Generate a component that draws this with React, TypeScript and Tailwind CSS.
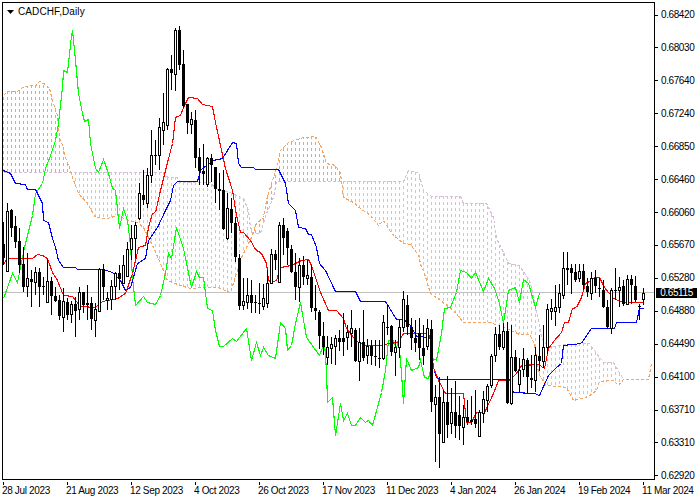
type Pt = [number, number];
// high, low, body top, body bottom, bullish — in chart pixels, one bar every 4px
type Bar = [number, number, number, number, number];

const bars: Bar[] = [
  [222, 265, 244, 258, 0], [203, 272, 211, 271, 1], [209, 237, 210, 228, 0], [216, 248, 226, 242, 0],
  [228, 273, 241, 265, 0], [247, 292, 264, 287, 0], [253, 297, 278, 286, 1], [270, 307, 279, 282, 0],
  [267, 295, 272, 282, 1], [268, 307, 272, 287, 0], [277, 295, 286, 287, 0], [259, 303, 281, 302, 1],
  [277, 315, 281, 296, 0], [287, 302, 296, 301, 0], [295, 320, 300, 316, 0], [288, 332, 301, 317, 1],
  [298, 320, 302, 315, 0], [301, 323, 304, 314, 1], [297, 337, 304, 311, 0], [287, 320, 292, 309, 1],
  [292, 313, 292, 305, 0], [285, 320, 303, 305, 0], [297, 330, 303, 319, 0], [303, 337, 309, 320, 1],
  [268, 312, 269, 311, 1], [264, 300, 269, 287, 0], [292, 310, 298, 300, 1], [280, 310, 286, 299, 1],
  [272, 300, 273, 286, 1], [265, 290, 273, 279, 0], [255, 284, 265, 283, 1], [242, 277, 249, 276, 1],
  [225, 260, 238, 249, 1], [222, 258, 225, 238, 1], [183, 220, 193, 218, 1], [170, 205, 195, 200, 0],
  [168, 208, 175, 203, 1], [130, 183, 155, 175, 1], [140, 165, 155, 156, 0], [118, 170, 127, 155, 1],
  [93, 145, 122, 130, 1], [68, 130, 69, 125, 1], [55, 90, 69, 73, 0], [28, 91, 30, 74, 1],
  [26, 70, 30, 65, 0], [50, 108, 64, 106, 0], [104, 134, 104, 123, 0], [112, 134, 119, 124, 1],
  [110, 168, 120, 158, 0], [148, 185, 157, 171, 0], [144, 185, 171, 174, 0], [157, 187, 158, 184, 1],
  [154, 182, 158, 165, 0], [167, 203, 167, 189, 0], [173, 210, 189, 191, 0], [170, 230, 190, 229, 0],
  [193, 240, 208, 238, 1], [198, 233, 209, 223, 0], [217, 262, 223, 257, 0], [254, 310, 258, 306, 0],
  [278, 310, 301, 305, 1], [278, 309, 295, 302, 1], [280, 313, 295, 303, 0], [295, 313, 302, 303, 0],
  [283, 314, 303, 304, 0], [284, 310, 298, 306, 1], [270, 308, 283, 303, 1], [249, 284, 254, 283, 1],
  [250, 270, 254, 260, 0], [222, 283, 225, 282, 1], [218, 255, 225, 238, 0], [228, 265, 231, 248, 0],
  [245, 273, 249, 272, 0], [253, 300, 272, 287, 0], [258, 302, 265, 287, 1], [256, 285, 265, 277, 0],
  [260, 285, 275, 278, 1], [265, 312, 277, 308, 0], [285, 320, 308, 311, 0], [310, 349, 312, 336, 0],
  [322, 355, 336, 347, 0], [336, 365, 347, 357, 1], [337, 364, 344, 348, 1], [335, 365, 338, 346, 1],
  [330, 351, 338, 342, 0], [313, 356, 338, 342, 0], [325, 350, 332, 337, 1], [310, 347, 328, 333, 1],
  [328, 362, 330, 361, 0], [328, 381, 342, 361, 1], [310, 361, 342, 358, 0], [339, 364, 346, 355, 1],
  [340, 365, 346, 356, 0], [340, 366, 356, 357, 0], [340, 368, 358, 359, 0], [315, 360, 322, 358, 1],
  [305, 335, 327, 328, 0], [325, 356, 326, 352, 0], [340, 376, 347, 352, 1], [320, 358, 327, 347, 1],
  [291, 332, 299, 327, 1], [295, 335, 305, 327, 0], [318, 350, 327, 338, 0], [320, 352, 338, 343, 0],
  [318, 360, 333, 348, 0], [325, 365, 348, 356, 0], [319, 350, 328, 346, 1], [320, 412, 329, 402, 0],
  [385, 462, 397, 404, 1], [377, 468, 397, 434, 0], [390, 442, 402, 442, 1], [376, 438, 402, 425, 0],
  [388, 434, 412, 423, 1], [381, 438, 412, 426, 0], [396, 440, 415, 426, 0], [405, 445, 417, 427, 1],
  [400, 425, 417, 422, 0], [396, 425, 420, 422, 0], [390, 428, 419, 424, 0], [410, 437, 412, 436, 1],
  [391, 423, 399, 413, 1], [384, 412, 386, 400, 1], [354, 388, 356, 385, 1], [327, 362, 334, 355, 1],
  [325, 350, 334, 347, 0], [323, 350, 331, 347, 1], [322, 404, 331, 403, 0], [325, 405, 357, 403, 1],
  [350, 372, 357, 371, 0], [358, 392, 370, 384, 1], [348, 377, 359, 369, 1], [358, 393, 360, 377, 0],
  [355, 388, 378, 380, 0], [347, 392, 355, 380, 1], [335, 371, 356, 361, 0], [325, 368, 347, 361, 1],
  [304, 354, 309, 347, 1], [299, 320, 308, 311, 1], [285, 326, 307, 311, 1], [284, 313, 293, 307, 1],
  [252, 299, 268, 295, 1], [252, 285, 268, 270, 0], [264, 294, 268, 273, 0], [264, 282, 272, 280, 0],
  [264, 282, 271, 278, 1], [264, 290, 271, 285, 0], [278, 297, 286, 292, 0], [272, 300, 278, 293, 1],
  [270, 293, 278, 286, 0], [278, 297, 288, 289, 0], [280, 308, 290, 307, 0], [300, 329, 307, 327, 0],
  [288, 334, 290, 328, 1], [268, 300, 290, 291, 0], [277, 307, 287, 290, 1], [280, 306, 286, 304, 0],
  [275, 305, 279, 304, 1], [275, 304, 279, 285, 0], [276, 302, 286, 300, 0], [304, 320, 306, 307, 0],
  [288, 305, 293, 299, 1],
];

// senkou span A (orange)
const spanA: Pt[] = [
  [3, 95], [7, 91], [17, 91], [22, 87], [30, 85], [35, 86], [39, 81], [45, 84], [49, 88], [52, 100], [57, 115],
  [59, 137], [62, 145], [65, 157], [70, 170], [72, 177], [78, 193], [87, 203], [95, 217], [107, 218], [117, 215],
  [128, 220], [137, 222], [143, 227], [153, 247], [163, 270], [167, 280], [180, 285], [190, 288], [203, 287],
  [217, 287], [230, 292], [241, 257], [251, 237], [256, 223], [263, 217], [266, 200], [271, 183], [277, 165],
  [280, 150], [288, 142], [303, 137], [315, 136], [321, 147], [326, 163], [335, 165], [340, 173], [341, 181],
  [343, 197], [353, 202], [360, 208], [370, 215], [378, 225], [383, 220], [391, 233], [403, 243], [410, 244],
  [418, 255], [421, 267], [423, 270], [430, 293], [440, 300], [453, 310], [463, 322], [489, 322], [504, 327],
  [519, 334], [529, 334], [534, 343], [538, 373], [546, 385], [566, 387], [573, 400], [588, 396], [596, 390],
  [599, 381], [613, 380], [618, 385], [623, 379], [648, 379], [651, 363],
];

// senkou span B (thistle)
const spanB: Pt[] = [
  [3, 172], [70, 172], [164, 172], [167, 177], [177, 177], [180, 182], [210, 182], [215, 188], [232, 193],
  [243, 198], [248, 210], [250, 227], [253, 233], [260, 233], [266, 213], [273, 197], [276, 181], [341, 181],
  [403, 181], [408, 170], [418, 172], [423, 190], [431, 196], [460, 196], [463, 203], [486, 203], [493, 217],
  [496, 238], [503, 252], [508, 263], [519, 265], [529, 280], [533, 295], [536, 310], [541, 337], [548, 347],
  [563, 344], [589, 343], [599, 357], [604, 362], [613, 362], [623, 379],
];

const chikou: Pt[] = [
  [3, 298], [12, 273], [17, 282], [24, 247], [32, 215], [35, 193], [42, 183], [45, 168], [50, 155], [55, 140],
  [58, 123], [62, 87], [63, 70], [67, 72], [71, 35], [72, 30], [75, 60], [78, 93], [82, 113], [84, 121], [88, 119],
  [90, 143], [95, 168], [98, 172], [103, 159], [108, 173], [112, 188], [115, 190], [119, 228], [123, 208], [127, 220],
  [130, 245], [132, 277], [135, 305], [143, 296], [147, 302], [155, 304], [160, 295], [165, 273], [168, 253],
  [171, 258], [176, 227], [183, 248], [191, 287], [196, 271], [199, 277], [203, 277], [207, 308], [212, 310],
  [215, 330], [219, 346], [223, 346], [232, 338], [236, 341], [246, 328], [251, 360], [256, 342], [260, 355],
  [263, 347], [268, 355], [275, 358], [280, 322], [285, 328], [287, 350], [291, 345], [295, 323], [300, 302],
  [306, 337], [319, 355], [324, 342], [326, 370], [327, 402], [332, 397], [335, 435], [340, 403], [343, 420],
  [347, 413], [351, 425], [355, 425], [360, 417], [365, 422], [368, 420], [372, 425], [381, 392], [385, 370],
  [388, 340], [393, 340], [396, 348], [398, 338], [401, 373], [403, 403], [406, 358], [411, 370], [418, 367],
  [420, 360], [424, 377], [428, 378], [433, 358], [436, 360], [441, 333], [444, 308], [450, 307], [456, 292],
  [460, 270], [466, 272], [471, 278], [475, 272], [483, 291], [488, 278], [494, 288], [499, 303], [503, 323],
  [508, 290], [515, 287], [519, 302], [523, 279], [528, 283], [535, 307], [539, 293],
];

const tenkan: Pt[] = [
  [3, 264], [7, 258], [32, 258], [37, 254], [42, 255], [47, 258], [52, 272], [57, 280], [63, 295], [72, 296],
  [80, 306], [95, 307], [102, 301], [117, 298], [125, 293], [132, 273], [138, 247], [145, 245], [148, 227],
  [152, 213], [155, 212], [160, 190], [165, 170], [172, 143], [175, 117], [180, 115], [183, 107], [188, 97],
  [197, 98], [202, 104], [212, 106], [215, 122], [220, 145], [225, 168], [232, 190], [236, 215], [240, 232],
  [243, 232], [250, 240], [255, 249], [261, 253], [266, 263], [268, 280], [271, 282], [276, 280], [280, 267],
  [291, 265], [301, 260], [308, 259], [311, 265], [316, 280], [320, 292], [328, 310], [336, 310], [343, 318],
  [346, 328], [353, 337], [358, 342], [365, 345], [383, 345], [388, 343], [398, 342], [403, 333], [428, 333],
  [430, 340], [433, 367], [438, 380], [445, 393], [463, 393], [466, 422], [471, 422], [476, 412], [484, 412],
  [493, 393], [498, 380], [509, 380], [516, 373], [521, 365], [538, 364], [544, 368], [548, 348], [554, 340],
  [561, 332], [564, 322], [568, 322], [572, 308], [576, 307], [581, 297], [585, 283], [591, 280], [594, 277],
  [599, 277], [604, 287], [613, 298], [623, 302], [643, 302],
];

const kijun: Pt[] = [
  [3, 170], [10, 173], [15, 183], [25, 184], [27, 189], [35, 189], [42, 203], [43, 220], [48, 222], [52, 238],
  [55, 247], [58, 260], [63, 267], [75, 267], [77, 269], [103, 269], [112, 272], [120, 280], [125, 290], [130, 287],
  [137, 263], [145, 258], [148, 240], [153, 233], [158, 225], [165, 210], [170, 200], [173, 185], [177, 181],
  [197, 181], [200, 170], [202, 168], [213, 160], [222, 158], [227, 150], [232, 142], [236, 143], [238, 163],
  [241, 167], [253, 167], [255, 169], [278, 169], [285, 183], [288, 203], [295, 210], [298, 227], [305, 228],
  [308, 234], [311, 234], [316, 247], [319, 263], [325, 270], [335, 291], [355, 291], [360, 301], [385, 301],
  [396, 319], [403, 319], [410, 325], [416, 336], [430, 337], [431, 360], [436, 377], [440, 379], [509, 379],
  [513, 392], [534, 393], [539, 395], [548, 375], [556, 367], [561, 363], [563, 345], [581, 343], [591, 328],
  [614, 328], [616, 322], [636, 322], [639, 308], [643, 308],
];

const prices = [
  "0.68420", "0.68030", "0.67640", "0.67240", "0.66850", "0.66460", "0.66060", "0.65670",
  "0.65280", "0.64880", "0.64490", "0.64100", "0.63710", "0.63310", "0.62920",
];

const dates = [
  "28 Jul 2023", "21 Aug 2023", "12 Sep 2023", "4 Oct 2023", "26 Oct 2023", "17 Nov 2023",
  "11 Dec 2023", "4 Jan 2024", "26 Jan 2024", "19 Feb 2024", "11 Mar 2024",
];

const toPoints = (pts: Pt[]): string => pts.map((p) => p.join(",")).join(" ");

function yAt(pts: Pt[], x: number): number | null {
  for (let i = 1; i < pts.length; i++) {
    const [x0, y0] = pts[i - 1];
    const [x1, y1] = pts[i];
    if (x >= x0 && x <= x1) return y0 + ((y1 - y0) * (x - x0)) / (x1 - x0 || 1);
  }
  return null;
}

function Cloud() {
  const cols = [];
  for (let x = 3.5; x < 652; x += 4) {
    const a = yAt(spanA, x);
    const b = yAt(spanB, x);
    if (a === null || b === null) continue;
    // dashes start at span B, so they stagger along span A
    cols.push(
      <line
        key={x}
        x1={x}
        x2={x}
        y1={Math.round(b)}
        y2={Math.round(a)}
        stroke={a < b ? "#f4a460" : "#d8bfd8"}
        strokeDasharray="3 3"
      />,
    );
  }
  return (
    <g shapeRendering="crispEdges">
      {cols}
      {/* half-pixel shift keeps flat runs one pixel tall */}
      <g fill="none" transform="translate(0.5 0.5)" strokeWidth={1.1} strokeDasharray="3 2">
        <polyline points={toPoints(spanB)} stroke="#d8bfd8" />
        <polyline points={toPoints(spanA)} stroke="#f4a460" />
      </g>
    </g>
  );
}

function Candles() {
  return (
    <g shapeRendering="crispEdges">
      {bars.map(([high, low, top, bottom, up], i) => {
        const x = 3.5 + 4 * i;
        return (
          <g key={i}>
            <line x1={x} x2={x} y1={high} y2={low} stroke="#000" />
            {up ? (
              <rect x={x - 1} y={top + 0.5} width={2} height={bottom - top} fill="#fff" stroke="#000" />
            ) : (
              <rect x={x - 1.5} y={top} width={3} height={Math.max(bottom - top, 1)} fill="#000" />
            )}
          </g>
        );
      })}
    </g>
  );
}

function Chart() {
  return (
    <svg viewBox="3 3 651 476" className="block w-[651px] h-[476px]">
      <line x1={3} x2={654} y1={292.5} y2={292.5} stroke="#c0c0c0" shapeRendering="crispEdges" />
      <Cloud />
      <g fill="none" shapeRendering="crispEdges" strokeWidth={1.1} transform="translate(0.5 0.5)">
        <polyline points={toPoints(chikou)} stroke="#00ff00" />
        <polyline points={toPoints(kijun)} stroke="#0000ff" />
        <polyline points={toPoints(tenkan)} stroke="#ff0000" />
      </g>
      <Candles />
    </svg>
  );
}

export default function App() {
  return (
    <div className="relative w-[700px] h-[500px] bg-white text-black overflow-hidden font-['Liberation_Sans','DejaVu_Sans',sans-serif] text-[10px] leading-none">
      <div className="flex pt-[2px] pl-[2px]">
        <div className="relative w-[653px] h-[478px] border border-black">
          <Chart />
          <div className="absolute left-[4px] top-[3px] flex items-center gap-[4px]">
            <svg viewBox="0 0 7 4" className="w-[7px] h-[4px]">
              <path d="M0 0h7L3.5 4z" fill="#000" />
            </svg>
            <span className="text-[10px] leading-[12px] tracking-[0.1px]">CADCHF,Daily</span>
          </div>
        </div>
        <div className="flex flex-col gap-[20.93px] pt-[7px]">
          {prices.map((p) => (
            <div key={p} className="flex items-center h-[12px] gap-[3px]">
              <div className="w-[3px] h-px bg-black" />
              <span className="tracking-[-0.4px]">{p}</span>
            </div>
          ))}
        </div>
      </div>
      <div className="flex pl-[3px]">
        {dates.map((d) => (
          <div key={d} className="w-[64px] shrink-0">
            <div className="w-px h-[3px] bg-black" />
            <div className="whitespace-nowrap -ml-[1px] mt-px tracking-[-0.35px]">{d}</div>
          </div>
        ))}
      </div>
      <div className="absolute left-[656px] top-[288px] w-[41px] h-[10px] bg-black text-white flex items-center justify-center text-[10px] tracking-[-0.4px]">
        0.65115
      </div>
    </div>
  );
}
